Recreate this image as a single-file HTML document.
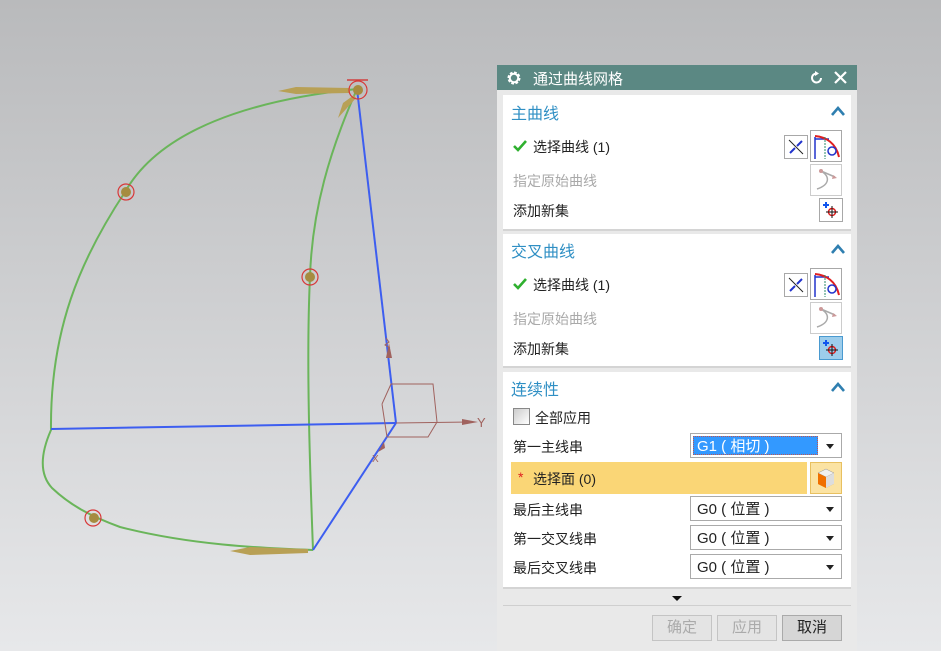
<!DOCTYPE html>
<html><head><meta charset="utf-8"><style>
*{margin:0;padding:0;box-sizing:border-box}
body{width:941px;height:651px;overflow:hidden;position:relative;background:linear-gradient(#b9babc,#e7e8ea);font-family:"Liberation Sans","Noto Sans CJK SC",sans-serif;font-size:14px;color:#222}
.a{position:absolute}
.panel{left:497px;top:65px;width:360px;height:586px;background:#e9e9e9}
.title{left:0;top:0;width:360px;height:25px;background:#5b8883;color:#fff;font-size:15px}
.sec{background:#fff;left:6px;width:348px;border-bottom:2px solid #d4d4d4}
.h{color:#2f8fc4;font-size:16px;left:8px}
.car{right:6px;width:14px;height:14px}
.lbl{left:10px;font-size:14px}
.gray{color:#a9a9a9}
.ib{width:24px;height:24px;border:1px solid #a8a8a8;background:#fff}
.dd{left:187px;width:152px;height:25px;border:1px solid #aaa;background:#fff;font-size:15px}
.dd span{position:absolute;left:6px;top:1px}
.dd i{position:absolute;right:7px;top:10px;border-left:4px solid transparent;border-right:4px solid transparent;border-top:5px solid #222}
.btn{top:550px;width:60px;height:26px;border:1px solid #c4c4c4;background:#e4e4e4;color:#aaa;font-size:15px;text-align:center;line-height:24px}
</style></head><body>
<svg class="a" style="left:0;top:0" width="500" height="651">
<g fill="none" stroke="#6ab55a" stroke-width="2">
<path d="M357,89 C250,100 160,130 125,192 C80,260 50,330 51,430 C40,455 40,475 52,488 C70,505 90,516 120,527 C190,545 260,548 313,550"/>
<path d="M357,89 C330,150 312,210 310,277 C306,360 310,470 313,550"/>
</g>
<g stroke="#3d5ef0" stroke-width="2">
<line x1="357" y1="89" x2="396" y2="423"/>
<line x1="51" y1="429" x2="396" y2="423"/>
<line x1="396" y1="423" x2="313" y2="550"/>
</g>
<g stroke="#a0625e" stroke-width="1" fill="none">
<path d="M382,404 L391,384 L433,384 L437,422 L428,437 L387,437 L382,404"/>
<line x1="396" y1="423" x2="470" y2="422"/>
<path d="M386,338 L389,342 L385,345 L390,348"/>
</g>
<path d="M462,419 L478,422 L462,425Z" fill="#a0625e"/>
<path d="M386,358 L389,343 L392,358Z" fill="#a0625e"/>
<path d="M378,452 L384,442 L385,448Z" fill="#a0625e"/>
<text x="477" y="427" font-size="13" fill="#a0625e" font-family="Liberation Sans">Y</text>
<text x="372" y="462" font-size="10" fill="#a0625e" font-family="Liberation Sans">X</text>
<g fill="#b8a055">
<path d="M278,91 L296,87 L350,88 L350,93 L296,94Z"/>
<path d="M230,551 L250,547 L308,549 L308,553 L250,555Z"/>
<path d="M338,118 L343,103 L354,95 L356,98 L347,108Z"/>
</g>
<line x1="347" y1="80" x2="368" y2="80" stroke="#d04040" stroke-width="1.5"/>
<g stroke="#d83838" stroke-width="1.2" fill="none">
<circle cx="358" cy="90" r="9"/><circle cx="126" cy="192" r="8"/><circle cx="310" cy="277" r="8"/><circle cx="93" cy="518" r="8"/>
</g>
<g fill="#a68c40">
<circle cx="358" cy="90" r="5"/><circle cx="126" cy="192" r="5"/><circle cx="310" cy="277" r="5"/><circle cx="94" cy="518" r="5"/>
</g>
</svg>

<div class="a panel">
 <div class="a title">
  <svg class="a" style="left:9px;top:5px" width="16" height="16" viewBox="0 0 16 16"><circle cx="8" cy="8" r="5" fill="none" stroke="#fff" stroke-width="3" stroke-dasharray="2.5 1.4"/><circle cx="8" cy="8" r="2" fill="#5b8883"/><circle cx="8" cy="8" r="4.2" fill="none" stroke="#fff" stroke-width="2"/></svg>
  <span class="a" style="left:36px;top:3px">通过曲线网格</span>
  <svg class="a" style="left:313px;top:6px" width="14" height="14"><path d="M11,7 A4.5,4.5 0 1 1 7,2.5" fill="none" stroke="#fff" stroke-width="2"/><path d="M5,0 L9,2.5 L5,5Z" fill="#fff"/></svg>
  <svg class="a" style="left:337px;top:6px" width="13" height="13"><path d="M1,1 L12,12 M12,1 L1,12" stroke="#fff" stroke-width="2.2"/></svg>
 </div>
 <div class="a sec" style="top:30px;height:136px">
  <span class="a h" style="top:5px">主曲线</span>
  <svg class="a car" style="top:9px" viewBox="0 0 14 14"><path d="M1,11 L7,4 L13,11" fill="none" stroke="#2f7fb0" stroke-width="2.6"/></svg>
  <svg class="a" style="left:10px;top:45px" width="14" height="12"><path d="M1,6 L5,10 L13,1" fill="none" stroke="#2fb02f" stroke-width="2.6"/></svg>
  <span class="a" style="left:30px;top:42px">选择曲线 (1)</span>
  <div class="a ib" style="left:281px;top:40px"><svg width="22" height="22"><line x1="4" y1="4" x2="18" y2="18" stroke="#222"/><path d="M5,17 L10,12 M12,10 L17,5" stroke="#2233cc" stroke-width="2"/></svg></div>
  <div class="a ib" style="left:307px;top:35px;width:32px;height:32px"><svg width="30" height="30"><path d="M4,28 V6 M4,8 H18" stroke="#2233cc" stroke-width="1.5" fill="none"/><path d="M4,5 C15,6 25,12 28,26" stroke="#e02020" stroke-width="2" fill="none"/><line x1="14" y1="6" x2="14" y2="28" stroke="#2a8a6a" stroke-dasharray="2 1"/><circle cx="21" cy="20" r="4" stroke="#2233cc" fill="none" stroke-width="1.5"/></svg></div>
  <span class="a gray" style="left:10px;top:76px">指定原始曲线</span>
  <div class="a ib" style="left:307px;top:69px;width:32px;height:32px;border-color:#ccc"><svg width="30" height="30"><path d="M6,24 C18,20 20,12 10,6 M10,6 L24,12" stroke="#aaa" stroke-width="1.5" fill="none"/><circle cx="10" cy="6" r="2" fill="#c99"/><path d="M22,10 L26,13 L21,14Z" fill="#c99"/></svg></div>
  <span class="a" style="left:10px;top:106px">添加新集</span>
  <div class="a ib" style="left:316px;top:103px"><svg width="22" height="22"><path d="M3,6 H9 M6,3 V9" stroke="#1155ee" stroke-width="2"/><circle cx="12" cy="13" r="3.5" stroke="#e02020" fill="none" stroke-width="1.5"/><path d="M12,7 V19 M6,13 H18" stroke="#111"/></svg></div>
 </div>
 <div class="a sec" style="top:169px;height:134px">
  <span class="a h" style="top:4px">交叉曲线</span>
  <svg class="a car" style="top:8px" viewBox="0 0 14 14"><path d="M1,11 L7,4 L13,11" fill="none" stroke="#2f7fb0" stroke-width="2.6"/></svg>
  <svg class="a" style="left:10px;top:44px" width="14" height="12"><path d="M1,6 L5,10 L13,1" fill="none" stroke="#2fb02f" stroke-width="2.6"/></svg>
  <span class="a" style="left:30px;top:41px">选择曲线 (1)</span>
  <div class="a ib" style="left:281px;top:39px"><svg width="22" height="22"><line x1="4" y1="4" x2="18" y2="18" stroke="#222"/><path d="M5,17 L10,12 M12,10 L17,5" stroke="#2233cc" stroke-width="2"/></svg></div>
  <div class="a ib" style="left:307px;top:34px;width:32px;height:32px"><svg width="30" height="30"><path d="M4,28 V6 M4,8 H18" stroke="#2233cc" stroke-width="1.5" fill="none"/><path d="M4,5 C15,6 25,12 28,26" stroke="#e02020" stroke-width="2" fill="none"/><line x1="14" y1="6" x2="14" y2="28" stroke="#2a8a6a" stroke-dasharray="2 1"/><circle cx="21" cy="20" r="4" stroke="#2233cc" fill="none" stroke-width="1.5"/></svg></div>
  <span class="a gray" style="left:10px;top:75px">指定原始曲线</span>
  <div class="a ib" style="left:307px;top:68px;width:32px;height:32px;border-color:#ccc"><svg width="30" height="30"><path d="M6,24 C18,20 20,12 10,6 M10,6 L24,12" stroke="#aaa" stroke-width="1.5" fill="none"/><circle cx="10" cy="6" r="2" fill="#c99"/><path d="M22,10 L26,13 L21,14Z" fill="#c99"/></svg></div>
  <span class="a" style="left:10px;top:105px">添加新集</span>
  <div class="a ib" style="left:316px;top:102px;background:#9dcdeb;border-color:#4a9ad0"><svg width="22" height="22"><path d="M3,6 H9 M6,3 V9" stroke="#1155ee" stroke-width="2"/><circle cx="12" cy="13" r="3.5" stroke="#e02020" fill="none" stroke-width="1.5"/><path d="M12,7 V19 M6,13 H18" stroke="#111"/></svg></div>
 </div>
 <div class="a sec" style="top:307px;height:217px">
  <span class="a h" style="top:4px">连续性</span>
  <svg class="a car" style="top:8px" viewBox="0 0 14 14"><path d="M1,11 L7,4 L13,11" fill="none" stroke="#2f7fb0" stroke-width="2.6"/></svg>
  <div class="a" style="left:10px;top:36px;width:17px;height:17px;border:1px solid #888;background:linear-gradient(135deg,#ccc,#fff)"></div>
  <span class="a" style="left:32px;top:36px">全部应用</span>
  <span class="a" style="left:10px;top:65px">第一主线串</span>
  <div class="a dd" style="top:61px"><div class="a" style="left:2px;top:2px;width:125px;height:19px;background:#3399ff;border:1px dotted #b55"></div><span style="color:#fff">G1 ( 相切 )</span><i></i></div>
  <div class="a" style="left:8px;top:90px;width:296px;height:32px;background:#fad676"></div>
  <span class="a" style="left:15px;top:97px;color:#e02020">*</span>
  <span class="a" style="left:30px;top:97px">选择面 (0)</span>
  <div class="a" style="left:307px;top:90px;width:32px;height:32px;background:#fbe3a3;border:1px solid #e8c060"><svg width="30" height="30"><path d="M7,10 L15,6 L23,10 L23,21 L15,25 L7,21Z" fill="#f3a100"/><path d="M7,10 L15,6 L23,10 L15,14Z" fill="#f0f0f0" stroke="#999" stroke-width=".5"/><path d="M15,14 L23,10 L23,21 L15,25Z" fill="#ddd"/><path d="M7,10 L15,14 L15,25 L7,21Z" fill="#f07000"/></svg></div>
  <span class="a" style="left:10px;top:128px">最后主线串</span>
  <div class="a dd" style="top:124px"><span>G0 ( 位置 )</span><i></i></div>
  <span class="a" style="left:10px;top:157px">第一交叉线串</span>
  <div class="a dd" style="top:153px"><span>G0 ( 位置 )</span><i></i></div>
  <span class="a" style="left:10px;top:186px">最后交叉线串</span>
  <div class="a dd" style="top:182px"><span>G0 ( 位置 )</span><i></i></div>
 </div>
 <div class="a" style="left:175px;top:531px;border-left:5px solid transparent;border-right:5px solid transparent;border-top:5px solid #111"></div>
 <div class="a" style="left:6px;top:540px;width:348px;height:1px;background:#cfcfcf"></div>
 <div class="a btn" style="left:155px">确定</div>
 <div class="a btn" style="left:220px">应用</div>
 <div class="a btn" style="left:285px;background:#d6d6d6;color:#222;border-color:#aaa">取消</div>
</div>
</body></html>
